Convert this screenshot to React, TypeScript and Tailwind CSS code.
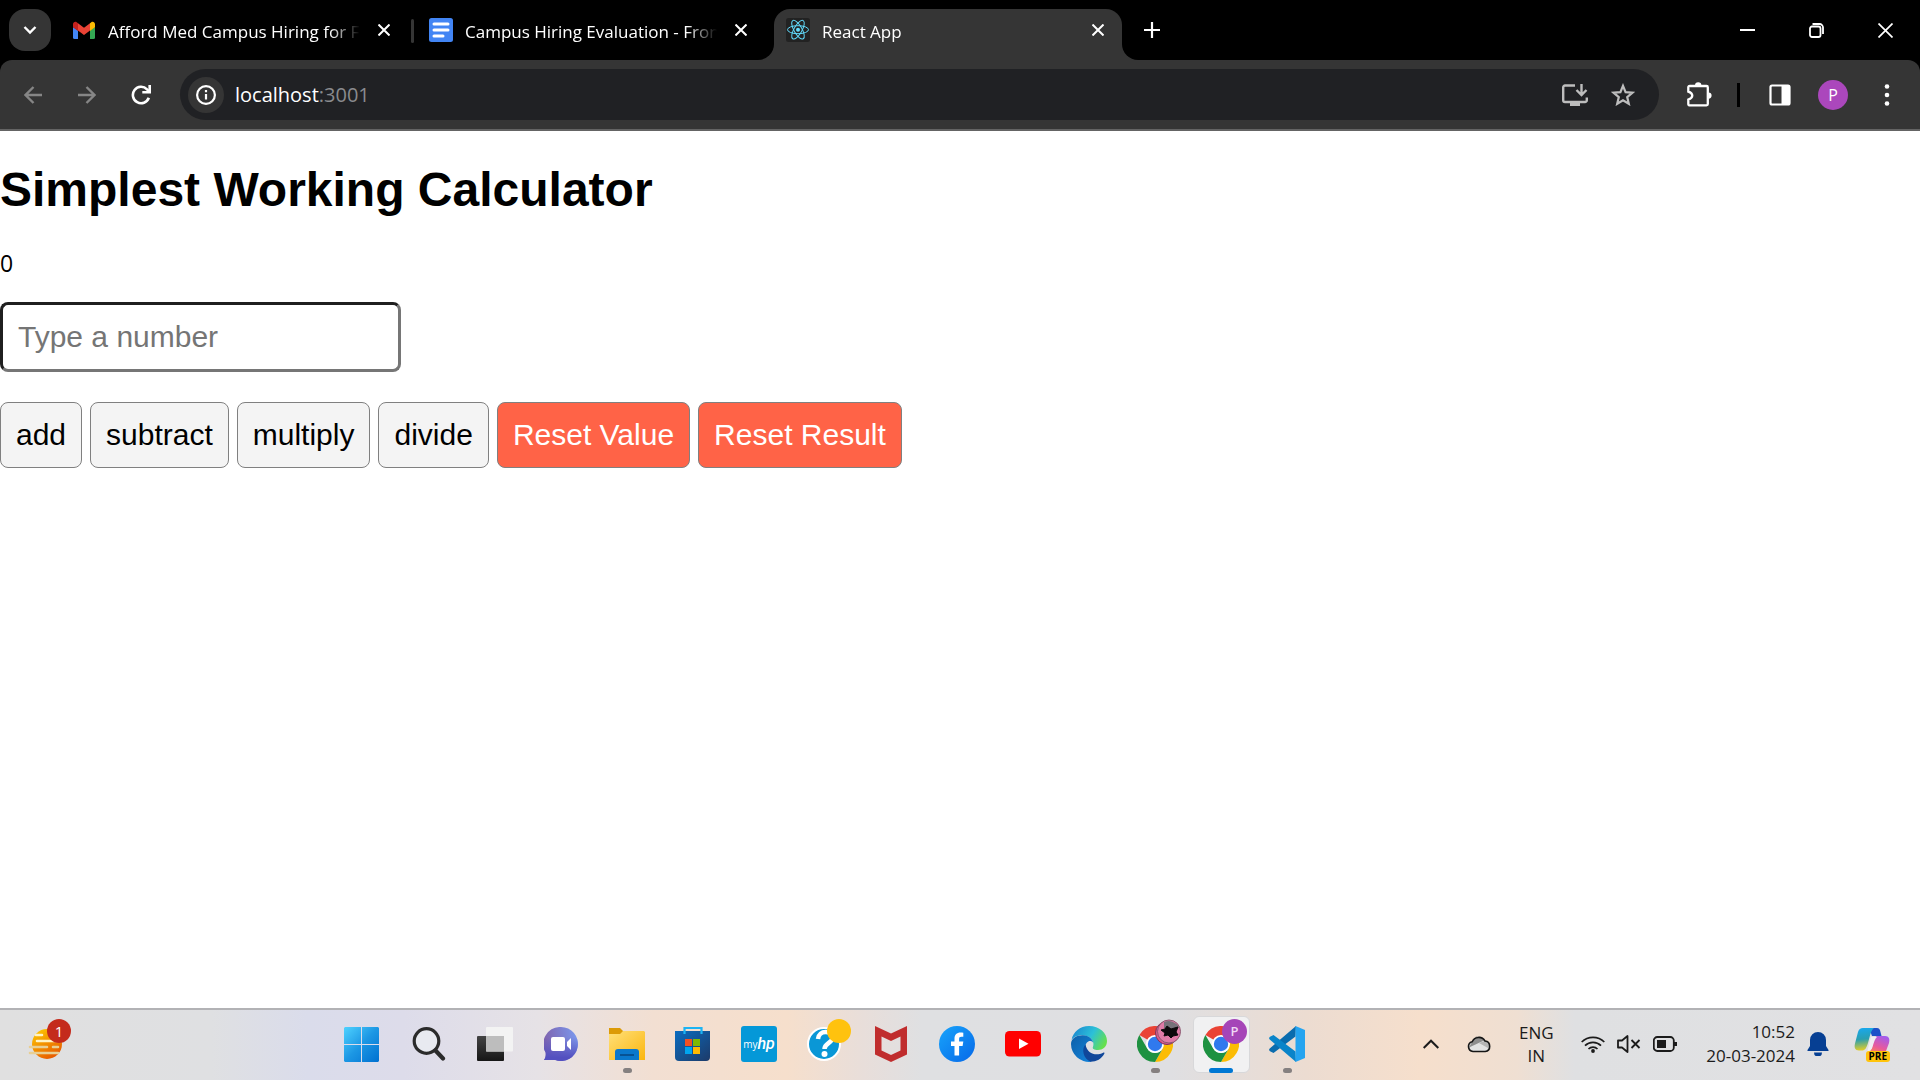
import React, { useRef, useState } from "react";
import type { ReactNode } from "react";

/* ---------- Browser icons ---------- */

function CloseGlyph({ className }: { className: string }) {
  return (
    <svg viewBox="0 0 12 12" className={className} fill="none" stroke="currentColor" aria-hidden="true">
      <path d="M.5.5l11 11M11.5.5l-11 11" strokeWidth="2" />
    </svg>
  );
}

function GmailLogo() {
  return (
    <svg viewBox="0 0 24 24" className="size-6 shrink-0" aria-hidden="true">
      <path d="M1 9l5 3.600V21H2.500A1.500 1.500 0 0 1 1 19.500z" fill="#4285f4" />
      <path d="M23 9l-5 3.600V21h3.500a1.500 1.500 0 0 0 1.500-1.500z" fill="#34a853" />
      <path d="M6 5.200v7.400l6 4.400 6-4.400V5.200l-6 4.600z" fill="#ea4335" />
      <path d="M1 6.300v3l5 3.600V5.200l-1.300-1C3.200 3 1 4.200 1 6.300z" fill="#c5221f" />
      <path d="M23 6.300v3l-5 3.600V5.200l1.300-1C20.800 3 23 4.200 23 6.300z" fill="#fbbc04" />
    </svg>
  );
}

function DocsLogo() {
  return (
    <svg viewBox="0 0 24 24" className="size-6 shrink-0" aria-hidden="true">
      <rect width="24" height="24" rx="2.500" fill="#4285f4" />
      <path d="M5 6h14M5 12h14M5 18h9" stroke="#fff" strokeWidth="3" strokeLinecap="round" />
    </svg>
  );
}

function ReactLogo() {
  return (
    <svg viewBox="0 0 24 24" className="size-6 shrink-0" aria-hidden="true">
      <rect width="24" height="24" rx="2.500" fill="#222" />
      <g fill="none" stroke="#61dafb" strokeWidth="1">
        <ellipse cx="12" cy="11.700" rx="10.500" ry="4" />
        <ellipse cx="12" cy="11.700" rx="10.500" ry="4" transform="rotate(60 12 11.700)" />
        <ellipse cx="12" cy="11.700" rx="10.500" ry="4" transform="rotate(120 12 11.700)" />
      </g>
      <circle cx="12" cy="11.700" r="2" fill="#61dafb" />
    </svg>
  );
}

/* ---------- Browser chrome ---------- */

type TabProps = { icon: ReactNode; title: string; active?: boolean; divider?: boolean };

function Tab({ icon, title, active, divider }: TabProps) {
  return (
    <div
      className={
        active
          ? "relative flex h-[51px] w-[348px] items-start rounded-t-2xl bg-[#353535] px-3 pt-[9px]"
          : "relative flex h-[51px] w-[348px] items-start px-3 pt-[9px]"
      }
    >
      {icon}
      <span className="ml-3 h-[27px] min-w-0 flex-1 overflow-hidden text-[17px] leading-[27px] whitespace-nowrap text-white [mask-image:linear-gradient(to_right,black_88%,transparent_100%)]">
        {title}
      </span>
      <button aria-label="Close tab" className="ml-3 grid size-6 shrink-0 place-items-center text-white">
        <CloseGlyph className="size-3" />
      </button>
      {divider && <span className="absolute top-[10px] -right-[6px] h-6 w-[3px] rounded bg-[#353535]" />}
      {active && (
        <>
          <span className="absolute bottom-0 -left-4 size-4 bg-[#353535]">
            <span className="block size-4 rounded-br-2xl bg-black" />
          </span>
          <span className="absolute -right-4 bottom-0 size-4 bg-[#353535]">
            <span className="block size-4 rounded-bl-2xl bg-black" />
          </span>
        </>
      )}
    </div>
  );
}

function TabStrip() {
  return (
    <div className="flex h-[60px] items-start bg-black pt-[9px] pl-[9px]">
      <button aria-label="Search tabs" className="grid size-[42px] shrink-0 place-items-center rounded-2xl bg-[#353535] text-white">
        <svg viewBox="0 0 14 10" className="h-[10px] w-[14px]" fill="none" stroke="currentColor" strokeWidth="2.400">
          <path d="M1.500 2L7 7.500 12.500 2" />
        </svg>
      </button>
      <div className="ml-[9px] flex gap-[9px]">
        <Tab icon={<GmailLogo />} title="Afford Med Campus Hiring for F" divider />
        <Tab icon={<DocsLogo />} title="Campus Hiring Evaluation - Fron" />
        <Tab icon={<ReactLogo />} title="React App" active />
      </div>
      <button aria-label="New tab" className="ml-[9px] grid size-[42px] shrink-0 place-items-center text-white">
        <svg viewBox="0 0 16 16" className="size-4" fill="none" stroke="currentColor" strokeWidth="2.200">
          <path d="M8 0v16M0 8h16" />
        </svg>
      </button>
      <div className="ml-auto flex text-white">
        <button aria-label="Minimize" className="grid h-[42px] w-[69px] place-items-center">
          <svg viewBox="0 0 15 15" className="size-[15px]">
            <path d="M0 6h15v2H0z" fill="currentColor" />
          </svg>
        </button>
        <button aria-label="Restore" className="grid h-[42px] w-[69px] place-items-center">
          <svg viewBox="0 0 15 15" className="size-[15px]" fill="none" stroke="currentColor" strokeWidth="1.800">
            <rect x="1" y="3.500" width="10.500" height="10.500" rx="2" />
            <path d="M3.500 1h7A3.500 3.500 0 0 1 14 4.500V11" />
          </svg>
        </button>
        <button aria-label="Close window" className="grid h-[42px] w-[69px] place-items-center">
          <svg viewBox="0 0 15 15" className="size-[15px]" fill="none" stroke="currentColor" strokeWidth="1.700">
            <path d="M.5.5l14 14M14.500.5l-14 14" />
          </svg>
        </button>
      </div>
    </div>
  );
}

function Toolbar() {
  return (
    <div className="bg-black">
      <div className="flex h-[71px] items-center rounded-t-xl border-b-2 border-[#646464] bg-[#353535] pl-[15px] text-white">
        <div className="flex gap-[18px]">
          <button aria-label="Back" className="grid size-9 place-items-center text-[#868686]">
            <svg viewBox="0 0 18 18" className="size-[18px]" fill="none" stroke="currentColor" strokeWidth="2.400">
              <path d="M18 9H1.500M9.500 1L1.500 9l8 8" />
            </svg>
          </button>
          <button aria-label="Forward" className="grid size-9 place-items-center text-[#868686]">
            <svg viewBox="0 0 18 18" className="size-[18px]" fill="none" stroke="currentColor" strokeWidth="2.400">
              <path d="M0 9h16.500M8.500 1l8 8-8 8" />
            </svg>
          </button>
          <button aria-label="Reload" className="grid size-9 place-items-center">
            <svg viewBox="0 0 20 20" className="size-5" fill="none" stroke="currentColor" strokeWidth="2.600">
              <path d="M17.800 12.800A8.200 8.200 0 1 1 16 4.300l2 2" />
              <path d="M18.700 0v7.300h-7.400" />
            </svg>
          </button>
        </div>
        <div className="ml-[21px] flex h-[51px] min-w-0 flex-1 items-center rounded-full bg-[#202124] pr-6 pl-2">
          <button aria-label="View site information" className="grid size-9 shrink-0 place-items-center rounded-full bg-[#353535]">
            <svg viewBox="0 0 20 20" className="size-5" fill="none" stroke="currentColor" strokeWidth="2.200">
              <circle cx="10" cy="10" r="8.900" />
              <path d="M10 9v5.500M10 5v2.200" />
            </svg>
          </button>
          <button className="ml-[11px] flex-1 text-left text-[20px] leading-7">
            localhost<span className="text-[#8a8b8e]">:3001</span>
          </button>
          <button aria-label="Install app" className="grid h-9 w-[26px] place-items-center text-[#bdbdbd]">
            <svg viewBox="0 0 26 22" className="h-[22px] w-[26px] overflow-visible" fill="none" stroke="currentColor" strokeWidth="2.400">
              <path d="M13 1.500H3A1.800 1.800 0 0 0 1.200 3.300v12.900A1.800 1.800 0 0 0 3 18h20a1.800 1.800 0 0 0 1.800-1.800V13.500M19.500 0v10.500M14.500 6l5 5 5-5" />
              <path d="M8 18h10v4H8z" fill="currentColor" stroke="none" />
            </svg>
          </button>
          <button aria-label="Bookmark this page" className="ml-[23px] grid h-9 w-6 place-items-center text-[#bdbdbd]">
            <svg viewBox="0 0 24 23" className="h-[23px] w-6" fill="none" stroke="currentColor" strokeWidth="2.200">
              <path d="M12 2.800l2.600 6.300 6.800.6-5.200 4.400 1.600 6.700-5.800-3.600-5.800 3.600 1.600-6.700-5.200-4.400 6.800-.6z" />
            </svg>
          </button>
        </div>
        <div className="flex items-center pr-[21px]">
          <button aria-label="Extensions" className="ml-[27px] grid h-9 w-[26px] place-items-center">
            <svg viewBox="0 0 26 26" className="size-[26px]">
              <path
                d="M4 4h16.500a1.300 1.300 0 0 1 1.300 1.300V22a1.300 1.300 0 0 1-1.300 1.300H4A1.300 1.300 0 0 1 2.300 22v-4.400c5.300-1.600 5.300-6.400 0-8V5.300A1.300 1.300 0 0 1 4 4z"
                fill="none"
                stroke="currentColor"
                strokeWidth="2.300"
              />
              <path d="M9 3.500a3.200 3.200 0 0 1 6.400 0zM22.500 10.500a3.100 3.100 0 0 1 0 6.200z" fill="currentColor" />
            </svg>
          </button>
          <span className="ml-[25px] h-6 w-[3px] bg-black" />
          <button aria-label="Side panel" className="ml-[29px] grid h-9 w-[22px] place-items-center">
            <svg viewBox="0 0 22 22" className="size-[22px]">
              <rect x="1.500" y="1.500" width="19" height="19" rx="1.500" fill="none" stroke="currentColor" strokeWidth="2.200" />
              <path d="M12.500 1h8v20h-8z" fill="currentColor" />
            </svg>
          </button>
          <button aria-label="Profile" className="ml-[27px] grid size-[30px] place-items-center rounded-full bg-[#ab47bc] text-[16px] leading-none">
            P
          </button>
          <button aria-label="More" className="ml-[27px] grid h-9 w-6 place-items-center">
            <svg viewBox="0 0 6 22" className="h-[22px] w-[6px]" fill="currentColor">
              <circle cx="3" cy="2.500" r="2.300" />
              <circle cx="3" cy="11" r="2.300" />
              <circle cx="3" cy="19.500" r="2.300" />
            </svg>
          </button>
        </div>
      </div>
    </div>
  );
}

/* ---------- Calculator page ---------- */

const OPERATIONS: { label: string; run: (a: number, b: number) => number }[] = [
  { label: "add", run: (a, b) => a + b },
  { label: "subtract", run: (a, b) => a - b },
  { label: "multiply", run: (a, b) => a * b },
  { label: "divide", run: (a, b) => a / b },
];

function Calculator() {
  const [result, setResult] = useState(0);
  const input = useRef<HTMLInputElement>(null);
  const reset = () => {
    if (input.current) input.current.value = "";
  };
  return (
    <main className="flex-1 bg-white pt-[31px] font-['Liberation_Sans',Arial,sans-serif] text-black">
      <h1 className="text-[48px] leading-[55px] font-bold">Simplest Working Calculator</h1>
      <form onSubmit={(e) => e.preventDefault()}>
        <p className="mt-[30px] font-['Open_Sans',sans-serif] text-[23px] leading-8">{result}</p>
        <input
          ref={input}
          type="text"
          inputMode="decimal"
          aria-label="Number"
          placeholder="Type a number"
          className="mt-[23px] block h-[70px] w-[401px] rounded-lg border-[3px] border-t-[#1f1f1f] border-r-[#767676] border-b-[#767676] border-l-[#1f1f1f] px-[15px] text-[30px] placeholder:text-[#757575]"
        />
        <div className="mt-[30px] flex gap-2 text-[30px] leading-[34px]">
          {OPERATIONS.map((op) => (
            <button
              key={op.label}
              type="button"
              onClick={() => setResult(op.run(result, Number(input.current?.value ?? 0)))}
              className="rounded-lg border border-[#808080] bg-[#f4f4f4] px-[15px] py-[15px]"
            >
              {op.label}
            </button>
          ))}
          <button type="button" onClick={reset} className="rounded-lg border border-[#808080] bg-[#ff6347] px-[15px] py-[15px] text-white">
            Reset Value
          </button>
          <button type="button" onClick={() => setResult(0)} className="rounded-lg border border-[#808080] bg-[#ff6347] px-[15px] py-[15px] text-white">
            Reset Result
          </button>
        </div>
      </form>
    </main>
  );
}

/* ---------- Taskbar icons ---------- */

function WeatherIcon() {
  return (
    <svg viewBox="0 0 36 36" className="size-9" aria-hidden="true">
      <defs>
        <linearGradient id="sun" x1="0" y1="0" x2=".6" y2="1">
          <stop offset="0" stopColor="#ffd000" />
          <stop offset="1" stopColor="#e85c00" />
        </linearGradient>
      </defs>
      <circle cx="19" cy="18" r="15" fill="url(#sun)" />
      <g strokeWidth="2.600" strokeLinecap="round">
        <path d="M8 9h6M9 15h24" stroke="#fff3c4" />
        <path d="M2 21h17M25 21h5M2 27h28" stroke="#e8cf94" />
      </g>
    </svg>
  );
}

function WindowsLogo() {
  return (
    <svg viewBox="0 0 35 35" className="mr-1 size-[35px]" aria-hidden="true">
      <defs>
        <linearGradient id="win" x1="0" y1="0" x2="35" y2="35" gradientUnits="userSpaceOnUse">
          <stop offset="0" stopColor="#4fd2ff" />
          <stop offset=".5" stopColor="#1c97e4" />
          <stop offset="1" stopColor="#0070d0" />
        </linearGradient>
      </defs>
      <path d="M1 0h16v17H0V1zM18 0h16l1 1v16H18zM0 18h17v17H1l-1-1zM18 18h17v16l-1 1H18z" fill="url(#win)" />
    </svg>
  );
}

function SearchIcon() {
  return (
    <svg viewBox="0 0 34 34" className="size-[34px]" fill="none" stroke="#2b2b2b" aria-hidden="true">
      <circle cx="14.500" cy="14" r="12.300" fill="#e8eaf0" strokeWidth="3.200" />
      <path d="M23.500 23.500l7.500 8" strokeWidth="4.200" strokeLinecap="round" />
    </svg>
  );
}

function TaskViewIcon() {
  return (
    <svg viewBox="0 0 36 34" className="h-[34px] w-9" aria-hidden="true">
      <defs>
        <linearGradient id="tv" x1="0" y1="0" x2="0" y2="1">
          <stop offset="0" stopColor="#444" />
          <stop offset="1" stopColor="#161616" />
        </linearGradient>
      </defs>
      <rect y="9" width="27" height="25" rx="1" fill="url(#tv)" />
      <rect x="9" width="27" height="24.500" rx="1" fill="#f3f3f3" />
      <path d="M9 9h18v15.500H9z" fill="#bdbdbd" />
    </svg>
  );
}

function ChatIcon() {
  return (
    <svg viewBox="0 0 34 34" className="size-[34px]" aria-hidden="true">
      <defs>
        <linearGradient id="chat" x1="0" y1=".3" x2="1" y2=".1">
          <stop offset="0" stopColor="#7f62ad" />
          <stop offset="1" stopColor="#7a9af0" />
        </linearGradient>
        <linearGradient id="chat2" x1="0" y1="0" x2="0" y2="1">
          <stop offset=".3" stopColor="#5558c8" stopOpacity="0" />
          <stop offset=".9" stopColor="#5350c0" />
        </linearGradient>
      </defs>
      <path d="M17 0a17 17 0 1 1-5.800 33H0c1.500-2 2-4 1.600-7.500A17 17 0 0 1 17 0z" fill="url(#chat)" />
      <path d="M17 0a17 17 0 1 1-5.800 33H0c1.500-2 2-4 1.600-7.500A17 17 0 0 1 17 0z" fill="url(#chat2)" />
      <rect x="7" y="10" width="14" height="14" rx="2" fill="#fff" />
      <path d="M23 15l4-4v12l-4-4z" fill="#fff" />
    </svg>
  );
}

function FolderIcon() {
  return (
    <svg viewBox="0 0 36 34" className="h-[34px] w-9" aria-hidden="true">
      <defs>
        <linearGradient id="fold" x1="0" y1="0" x2="1" y2="1">
          <stop offset="0" stopColor="#ffe07a" />
          <stop offset="1" stopColor="#fbb60e" />
        </linearGradient>
      </defs>
      <path d="M0 1h11l4 4-4 4H0z" fill="#dc9a06" />
      <path d="M0 7h11l3-3h21l1 1v28H0z" fill="url(#fold)" />
      <path d="M6 33v-8a3 3 0 0 1 3-3h18a3 3 0 0 1 3 3v8z" fill="#0a78cc" />
      <path d="M11 28h14" stroke="#075293" strokeWidth="2" />
    </svg>
  );
}

function StoreIcon() {
  return (
    <svg viewBox="0 0 36 36" className="size-9" aria-hidden="true">
      <defs>
        <linearGradient id="store" x1="0" y1="0" x2="1" y2="1">
          <stop offset="0" stopColor="#0a6cc0" />
          <stop offset="1" stopColor="#1d3a68" />
        </linearGradient>
      </defs>
      <path d="M0 5h35v26a4 4 0 0 1-4 4H4a4 4 0 0 1-4-4z" fill="url(#store)" />
      <path d="M9.500 8V2h17v6" fill="none" stroke="#1cb4f4" strokeWidth="2.200" />
      <path d="M10 13h7v7h-7z" fill="#f25022" />
      <path d="M18 13h7v7h-7z" fill="#7fba00" />
      <path d="M10 21h7v7h-7z" fill="#00a4ef" />
      <path d="M18 21h7v7h-7z" fill="#ffb900" />
    </svg>
  );
}

function MyHpIcon() {
  return (
    <span className="flex size-9 items-center justify-center rounded-[3px] bg-[#0498d8] leading-none text-white">
      <span className="text-[10px]">my</span>
      <span className="font-['Roboto',sans-serif] text-[16px] font-medium italic">hp</span>
    </span>
  );
}

function HelpIcon() {
  return (
    <span className="relative grid size-9 place-items-center">
      <svg viewBox="0 0 36 36" className="size-9" aria-hidden="true">
        <circle cx="17" cy="18" r="16" fill="#0a97d6" stroke="#fff" strokeWidth="2" />
        <path d="M11 13c.5-5 4-7 7.500-7 4 0 7 2.300 7 5.800 0 5-8 5.200-8 11.200" fill="none" stroke="#fff" strokeWidth="4.500" />
        <circle cx="17.500" cy="28" r="3" fill="#fff" />
      </svg>
      <span className="absolute -top-[7px] -right-[8px] size-6 rounded-full bg-[#ffc20e]" />
    </span>
  );
}

function McAfeeIcon() {
  return (
    <svg viewBox="0 0 32 36" className="h-9 w-8" aria-hidden="true">
      <path d="M0 0l16 7.500L32 0v28.500L16 36 0 28.500zM6.500 10.500v14L16 29l9.500-4.500v-14L16 15z" fill="#c02d2d" fillRule="evenodd" />
    </svg>
  );
}

function FacebookIcon() {
  return (
    <svg viewBox="0 0 36 36" className="size-9" aria-hidden="true">
      <defs>
        <linearGradient id="fb" x1="0" y1="0" x2="1" y2="1">
          <stop offset="0" stopColor="#18a4fb" />
          <stop offset="1" stopColor="#0668e8" />
        </linearGradient>
      </defs>
      <circle cx="18" cy="18" r="18" fill="url(#fb)" />
      <path d="M15.500 29.500V20H12v-4.500h3.500v-3C15.500 8.700 17.800 6.500 21.500 6.500c1 0 2 .1 2.800.3v3.900h-2c-1.700 0-2.200.9-2.200 2.200v2.600h4.200l-.7 4.500h-3.500v9.500z" fill="#fff" />
    </svg>
  );
}

function YouTubeIcon() {
  return (
    <svg viewBox="0 0 36 26" className="h-[26px] w-9" aria-hidden="true">
      <rect width="36" height="25.500" rx="4.500" fill="#f00" />
      <path d="M14 7.500l9.500 5.300L14 18z" fill="#fff" />
    </svg>
  );
}

function EdgeIcon() {
  return (
    <svg viewBox="0 0 36 36" className="size-9" aria-hidden="true">
      <defs>
        <linearGradient id="edgeTop" x1="0" y1=".2" x2="1" y2=".6">
          <stop offset="0" stopColor="#1a86d0" />
          <stop offset=".55" stopColor="#2cc0d8" />
          <stop offset="1" stopColor="#66e04c" />
        </linearGradient>
        <linearGradient id="edgeMid" x1="0" y1="0" x2="1" y2="1">
          <stop offset="0" stopColor="#0d5fa8" />
          <stop offset="1" stopColor="#1485dd" />
        </linearGradient>
      </defs>
      <path d="M.5 14C2 6 9 0 18 0c10.500 0 18 7 18 15 0 6-4.500 9-9 9-4 0-6-1.200-5-3.200C24 16 20 9.500 12 9.200 7 9 2.500 11 .5 14z" fill="url(#edgeTop)" />
      <path d="M0 18C0 12 6 9 12 9.200c6 .3 9.800 4 10.300 7.800-1-2-3.300-2.500-5-1.500-4.300 2.500-4.300 10 1 13.500 3.500 2.300 4 4.500 1.500 6.800A18 18 0 0 1 0 18z" fill="url(#edgeMid)" />
      <path d="M14.500 18.500c-4.500 5-2 14 5 17.300 6 0 11.200-3 13.800-8 .5-1-.3-1.500-1.200-1-7 3.500-16.100 1-17.600-8.300z" fill="#10479a" />
    </svg>
  );
}

function ChromeLogo() {
  return (
    <svg viewBox="0 0 36 36" className="size-9" aria-hidden="true">
      <path d="M18 18L2.400 9A18 18 0 0 1 33.600 9z" fill="#ea4335" />
      <path d="M18 9h15.600A18 18 0 0 1 18 36l7.800-13.500z" fill="#fbbc04" />
      <path d="M2.400 9l7.800 13.500A9 9 0 0 0 25.800 22.500L18 36A18 18 0 0 1 2.400 9z" fill="#1e9141" />
      <circle cx="18" cy="18" r="9" fill="#fff" />
      <circle cx="18" cy="18" r="7.200" fill="#3079ee" />
    </svg>
  );
}

function ChromePhoto() {
  return (
    <span className="relative block">
      <ChromeLogo />
      <svg viewBox="0 0 26 26" className="absolute -top-[7px] -right-[8px] size-[26px]" aria-hidden="true">
        <circle cx="12" cy="14" r="11.500" fill="#d9588f" stroke="#7d3657" strokeWidth="1" />
        <circle cx="14" cy="12.500" r="11.500" fill="#e07aa6" stroke="#8b5a70" strokeWidth="1" />
        <path d="M9 3a12 12 0 0 1 15 5l-6 5-9-4z" fill="#77727a" />
        <path d="M6 11l4-1 2-3 4 3 7-2-2 5 2 3-5 1-2 2-3-3-4 1 1-3z" fill="#0d080b" stroke="#0d080b" strokeWidth="1" />
      </svg>
    </span>
  );
}

function ChromeProfile() {
  return (
    <span className="relative block">
      <ChromeLogo />
      <span className="absolute -top-[7px] -right-[8px] grid size-[25px] place-items-center rounded-full bg-[#a545b8] text-[13px] leading-none font-semibold text-[#f0d8f4]">
        P
      </span>
    </span>
  );
}

function VsCodeIcon() {
  return (
    <svg viewBox="0 0 36 36" className="size-9" aria-hidden="true">
      <path d="M27 0l-.5 10.500L4.500 27 1 25.200c-1.200-1-1.200-2 0-3z" fill="#0a6cae" />
      <path d="M27 36l-.5-10.500L4.500 9 1 10.800c-1.200 1-1.200 2 0 3z" fill="#0a84c9" />
      <path d="M26.500 0L36 4v28l-9.500 4z" fill="#25a4f0" />
    </svg>
  );
}

type AppEntry = { name: string; icon: ReactNode; state?: "open" | "active" };

const APPS: AppEntry[] = [
  { name: "Start", icon: <WindowsLogo /> },
  { name: "Search", icon: <SearchIcon /> },
  { name: "Task view", icon: <TaskViewIcon /> },
  { name: "Chat", icon: <ChatIcon /> },
  { name: "File Explorer", icon: <FolderIcon />, state: "open" },
  { name: "Microsoft Store", icon: <StoreIcon /> },
  { name: "myHP", icon: <MyHpIcon /> },
  { name: "Support", icon: <HelpIcon /> },
  { name: "McAfee", icon: <McAfeeIcon /> },
  { name: "Facebook", icon: <FacebookIcon /> },
  { name: "YouTube", icon: <YouTubeIcon /> },
  { name: "Edge", icon: <EdgeIcon /> },
  { name: "Chrome, first profile", icon: <ChromePhoto />, state: "open" },
  { name: "Chrome, second profile", icon: <ChromeProfile />, state: "active" },
  { name: "Visual Studio Code", icon: <VsCodeIcon />, state: "open" },
];

function Taskbar() {
  return (
    <footer className="flex h-[72px] items-center border-t-2 border-[#b2b2b5] bg-[linear-gradient(to_right,#e0e0e0_0%,#dfe0e2_11%,#dadceb_16%,#dddcea_21%,#e6e2e6_28%,#f2dfd2_34%,#f6dfcc_41%,#e8deda_45%,#dfe0e2_48%,#dfdfe2_61%,#ecdcd1_68%,#f6dfcc_74%,#efdfd2_79%,#dfe0e2_82%,#e1e1e3_100%)] pb-[2px] text-[#1b1b1b]">
      <div className="w-[330px] pl-[28px]">
        <button aria-label="Weather, 1 alert" className="relative block">
          <WeatherIcon />
          <span className="absolute -top-[7px] left-[19px] grid size-6 place-items-center rounded-full bg-[#c42b1c] text-[15px] leading-none text-white">
            1
          </span>
        </button>
      </div>
      <nav aria-label="Apps" className="flex">
        {APPS.map((app) => (
          <button key={app.name} aria-label={app.name} className="relative grid h-[66px] w-[66px] place-items-center">
            <span
              className={
                app.state === "active"
                  ? "grid size-[57px] place-items-center rounded-md border border-[#d8d8da] bg-[#f1f1f2]"
                  : "grid size-[57px] place-items-center"
              }
            >
              {app.icon}
            </span>
            {app.state === "open" && <span className="absolute bottom-1 h-[5px] w-[9px] rounded-full bg-[#858080]" />}
            {app.state === "active" && <span className="absolute bottom-1 h-[5px] w-6 rounded-full bg-[#0078d4]" />}
          </button>
        ))}
      </nav>
      <div className="ml-auto flex items-center pr-[30px]">
        <button aria-label="Show hidden icons" className="grid size-6 place-items-center">
          <svg viewBox="0 0 16 10" className="h-[10px] w-4" fill="none" stroke="currentColor" strokeWidth="2">
            <path d="M.7 9L8 1.700 15.300 9" />
          </svg>
        </button>
        <button aria-label="OneDrive" className="ml-6">
          <svg viewBox="0 0 24 18" className="h-[18px] w-6">
            <path d="M6 16.500a5 5 0 0 1-.8-9.800A7.200 7.200 0 0 1 18 6a5.300 5.300 0 0 1 .2 10.500z" fill="#e3e3e3" />
            <path d="M2 12.500l15-7-2-3.500-6-.5-4 5.200z" fill="#8e8e8e" />
            <path d="M12 8l5.500-2 4.500 3 .5 3-1.500 1z" fill="#b5b5b5" />
            <path d="M6 16.500a5 5 0 0 1-.8-9.800A7.200 7.200 0 0 1 18 6a5.300 5.300 0 0 1 .2 10.500z" fill="none" stroke="#161616" strokeWidth="1.600" />
          </svg>
        </button>
        <button className="ml-6 w-[42px] text-center text-[17px] leading-[23px]">
          ENG
          <br />
          IN
        </button>
        <button aria-label="Network, volume and battery" className="ml-6 flex items-center gap-3">
          <svg viewBox="0 0 24 18" className="h-[18px] w-6" fill="none" stroke="currentColor" strokeWidth="1.700">
            <path d="M.7 7a16 16 0 0 1 22.600 0M4 10.700a11.300 11.300 0 0 1 16 0M7.500 14a6.300 6.300 0 0 1 9 0" />
            <circle cx="12" cy="16" r="1.900" fill="currentColor" stroke="none" />
          </svg>
          <svg viewBox="0 0 24 18" className="h-[18px] w-6" fill="none" stroke="currentColor" strokeWidth="1.800">
            <path d="M1 5.500h4L10.500 1v16L5 12.500H1z" strokeLinejoin="round" />
            <path d="M14.500 5l8 8M22.500 5l-8 8" />
          </svg>
          <svg viewBox="0 0 24 18" className="h-[18px] w-6">
            <rect x=".8" y="2" width="20" height="14" rx="3.500" fill="none" stroke="currentColor" strokeWidth="1.800" />
            <path d="M4 5h9v8H4zM21 7h3v4h-3z" fill="currentColor" />
          </svg>
        </button>
        <button className="ml-[29px] text-right text-[17px] leading-6">
          10:52
          <br />
          20-03-2024
        </button>
        <button aria-label="Notifications" className="ml-3">
          <svg viewBox="0 0 22 24" className="h-6 w-[22px]" fill="#063f93">
            <path d="M11 0a8 8 0 0 1 8 8v6l2.500 4v1H.5v-1L3 14V8a8 8 0 0 1 8-8zM7 20.500h8a4 4 0 0 1-8 0z" />
          </svg>
        </button>
        <button aria-label="Copilot" className="relative ml-[25px]">
          <svg viewBox="0 0 36 36" className="size-9">
            <defs>
              <linearGradient id="copA" x1=".3" y1="0" x2=".4" y2="1">
                <stop offset="0" stopColor="#18a8ee" />
                <stop offset=".5" stopColor="#2a9fb0" />
                <stop offset="1" stopColor="#e8cf24" />
              </linearGradient>
              <linearGradient id="copB" x1=".8" y1="0" x2=".3" y2="1">
                <stop offset="0" stopColor="#a05cf0" />
                <stop offset=".6" stopColor="#e85a9c" />
                <stop offset="1" stopColor="#ff8a4c" />
              </linearGradient>
            </defs>
            <path d="M15 2h8c2 0 3 1.500 3.500 4l1 4H18z" fill="#1d50c8" />
            <path d="M9 2h11c-3 2-4 8-6 15-1.500 5-3 7.500-6 7.500H5c-4 0-5-3-4-7L4 6c.8-2.700 2.500-4 5-4z" fill="url(#copA)" />
            <path d="M24 10h7c4 0 5 3 4 7l-3 8c-1 3-3 3-6 3H12c4-1 5-4 7-10 1.500-6 2-8 5-8z" fill="url(#copB)" />
            <path d="M17 11h6c-2 1.500-3 5-4.500 10-1 3-2.500 4-5 4z" fill="#f1eff4" />
          </svg>
          <span className="absolute right-0 bottom-0 rounded-[3px] bg-[#ffc40c] px-[3px] text-[10px] leading-[11px] font-bold text-black">
            PRE
          </span>
        </button>
      </div>
    </footer>
  );
}

export default function App() {
  return (
    <div className="flex min-h-screen flex-col bg-white font-['Open_Sans','Noto_Sans',sans-serif]">
      <header>
        <TabStrip />
        <Toolbar />
      </header>
      <Calculator />
      <Taskbar />
    </div>
  );
}
